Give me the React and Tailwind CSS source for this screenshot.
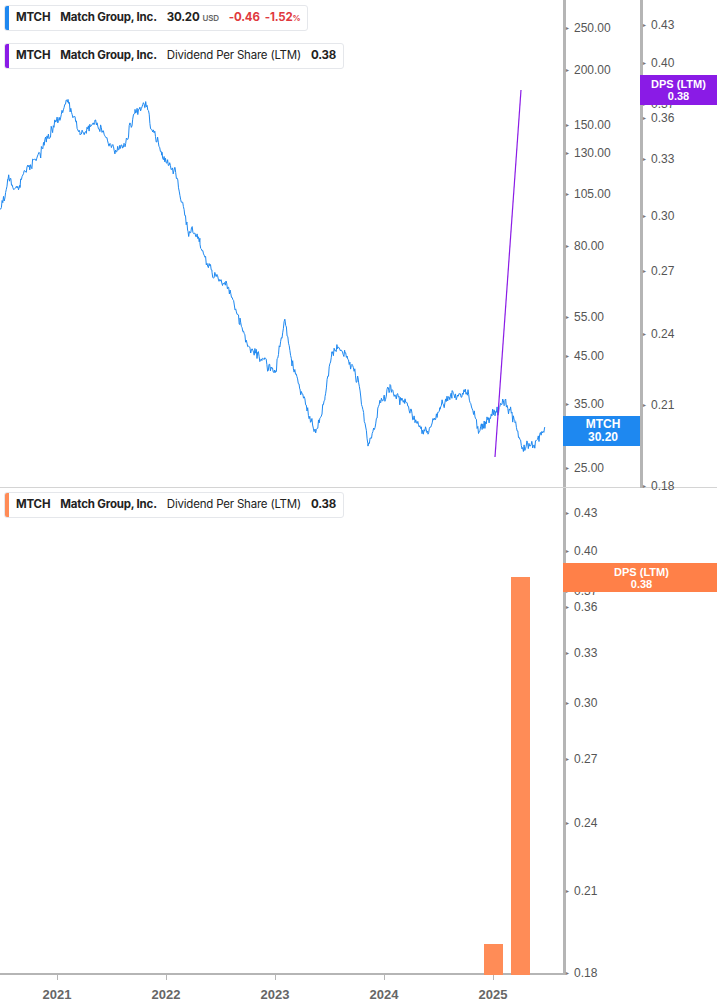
import React from 'react';

const font = { fontFamily: 'Inter, "Liberation Sans", sans-serif' };

// rough price path through key points, with deterministic noise
const keys = [[0,210],[8,180],[20,190],[40,150],[55,120],[68,102],[80,135],[95,125],[110,140],[125,145],[135,112],[145,100],[152,125],[162,150],[175,170],[188,230],[200,240],[212,275],[228,285],[240,320],[250,350],[262,360],[275,370],[285,325],[292,365],[300,395],[315,428],[325,400],[332,355],[345,355],[358,380],[368,440],[380,405],[390,388],[405,400],[415,420],[428,435],[440,410],[452,395],[468,390],[480,430],[495,410],[505,400],[515,425],[522,450],[532,440],[545,428]];
function buildPath() {
  let i0 = 1;
  const rnd = () => { const v = Math.sin(i0++ * 12.9898) * 43758.5453; return v - Math.floor(v) - 0.5; };
  const pts = [];
  let walk = 0;
  for (let i = 0; i < keys.length - 1; i++) {
    const [x0, y0] = keys[i], [x1, y1] = keys[i + 1];
    for (let x = x0; x < x1; x += 0.7) {
      const t = (x - x0) / (x1 - x0);
      walk = walk * 0.85 + rnd() * 6;
      pts.push([x, y0 + (y1 - y0) * t + walk + rnd() * 7]);
    }
  }
  pts.push(keys[keys.length - 1]);
  return 'M' + pts.map(p => p[0].toFixed(1) + ' ' + p[1].toFixed(1)).join(' L');
}
const pricePath = buildPath();

const priceTicks = [['250.00',27],['200.00',69],['150.00',124],['130.00',152],['105.00',193],['80.00',245],['55.00',316],['45.00',355],['35.00',403],['25.00',467]];
const dpsTicks = [['0.43',24],['0.40',62],['0.37',103],['0.36',117],['0.33',158],['0.30',215],['0.27',270],['0.24',333],['0.21',404],['0.18',485]];
const lowTicks = [['0.43',24],['0.40',62],['0.37',102],['0.36',118],['0.33',164],['0.30',214],['0.27',270],['0.24',334],['0.21',402],['0.18',484]];

function Ticks({ ticks }) {
  return ticks.map(([l, y]) => (
    <div key={l + y} className="absolute left-0 flex items-center gap-[5px] text-[12px] text-[#555]" style={{ top: y - 8 }}>
      <span className="text-[6px] leading-none text-[#777]">▸</span>{l}
    </div>
  ));
}

function Legend({ color, children }) {
  return (
    <div className="flex items-center h-[26px] bg-white border border-[#e5e7eb] rounded-[3px] overflow-hidden text-[11.5px] text-[#222] w-fit tracking-[-0.2px]">
      <div className="w-[4px] h-full" style={{ background: color }} />
      <div className="flex items-center gap-[10px] px-[7px] whitespace-nowrap">{children}</div>
    </div>
  );
}

export default function App() {
  return (
    <div className="w-[717px] h-[1005px] bg-white flex flex-col overflow-hidden" style={font}>
      {/* top pane */}
      <div className="flex h-[488px] border-b border-[#d4d4d4]">
        <div className="relative w-[563px]">
          <svg className="absolute inset-0" width="563" height="487">
            <path d={pricePath} fill="none" stroke="#1e88f0" strokeWidth="1" />
            <line x1="495" y1="457" x2="521" y2="90" stroke="#8a1be6" strokeWidth="1.2" />
          </svg>
          <div className="absolute left-[4px] top-[5px] flex flex-col gap-[12px]">
            <Legend color="#1e88f0">
              <b>MTCH</b><b>Match Group, Inc.</b>
              <span><b>30.20</b> <span className="text-[8px] text-[#666] font-semibold">USD</span></span>
              <span className="text-[#e0393e] font-bold">-0.46 &nbsp;-1.52<span className="text-[8px]">%</span></span>
            </Legend>
            <Legend color="#8a1be6">
              <b>MTCH</b><b>Match Group, Inc.</b><span>Dividend Per Share (LTM)</span><b>0.38</b>
            </Legend>
          </div>
        </div>
        <div className="relative w-[77px] border-l-[3px] border-[#b5b5b5]" style={{ fontFamily: '"Liberation Sans", sans-serif' }}>
          <Ticks ticks={priceTicks} />
          <div className="absolute left-[-3px] top-[416px] w-[80px] h-[30px] bg-[#1e88f0] text-white text-[12px] font-bold leading-[13px] flex flex-col items-center justify-center">
            <span>MTCH</span><span>30.20</span>
          </div>
        </div>
        <div className="relative flex-1" style={{ fontFamily: '"Liberation Sans", sans-serif' }}>
          <div className="absolute left-0 top-0 w-[3px] h-[488px] bg-[#b5b5b5]" />
          <div className="absolute left-[3px] top-0"><Ticks ticks={dpsTicks} /></div>
          <div className="absolute left-0 top-[75px] w-full h-[30px] bg-[#8a1be6] text-white text-[11px] font-bold leading-[12px] flex flex-col items-center justify-center">
            <span>DPS (LTM)</span><span>0.38</span>
          </div>
        </div>
      </div>
      {/* bottom pane */}
      <div className="flex h-[487px]">
        <div className="relative w-[563px] border-b-[2px] border-[#b5b5b5]">
          <svg className="absolute inset-0" width="563" height="487">
            <rect x="484" y="456" width="19" height="31" fill="#ff8c57" />
            <rect x="511" y="89" width="19" height="398" fill="#ff8c57" />
          </svg>
          <div className="absolute left-[4px] top-[4px]">
            <Legend color="#ff8c57">
              <b>MTCH</b><b>Match Group, Inc.</b><span>Dividend Per Share (LTM)</span><b>0.38</b>
            </Legend>
          </div>
        </div>
        <div className="relative flex-1 border-l-[3px] border-[#b5b5b5]" style={{ fontFamily: '"Liberation Sans", sans-serif' }}>
          <Ticks ticks={lowTicks} />
          <div className="absolute left-[-3px] top-[75px] w-[157px] h-[29px] bg-[#ff8048] text-white text-[11px] font-bold leading-[12px] flex flex-col items-center justify-center">
            <span>DPS (LTM)</span><span>0.38</span>
          </div>
        </div>
      </div>
      {/* x axis */}
      <div className="relative w-[563px] h-[30px] text-[13px] font-bold text-[#666]" style={{ fontFamily: '"Liberation Sans", sans-serif' }}>
        {[['2021',57],['2022',166],['2023',275],['2024',384],['2025',493]].map(([l, x]) => (
          <div key={l} className="absolute top-0 flex flex-col items-center" style={{ left: x - 20, width: 40 }}>
            <div className="w-px h-[5px] bg-[#b5b5b5]" />
            <span className="mt-[5px]">{l}</span>
          </div>
        ))}
      </div>
    </div>
  );
}
